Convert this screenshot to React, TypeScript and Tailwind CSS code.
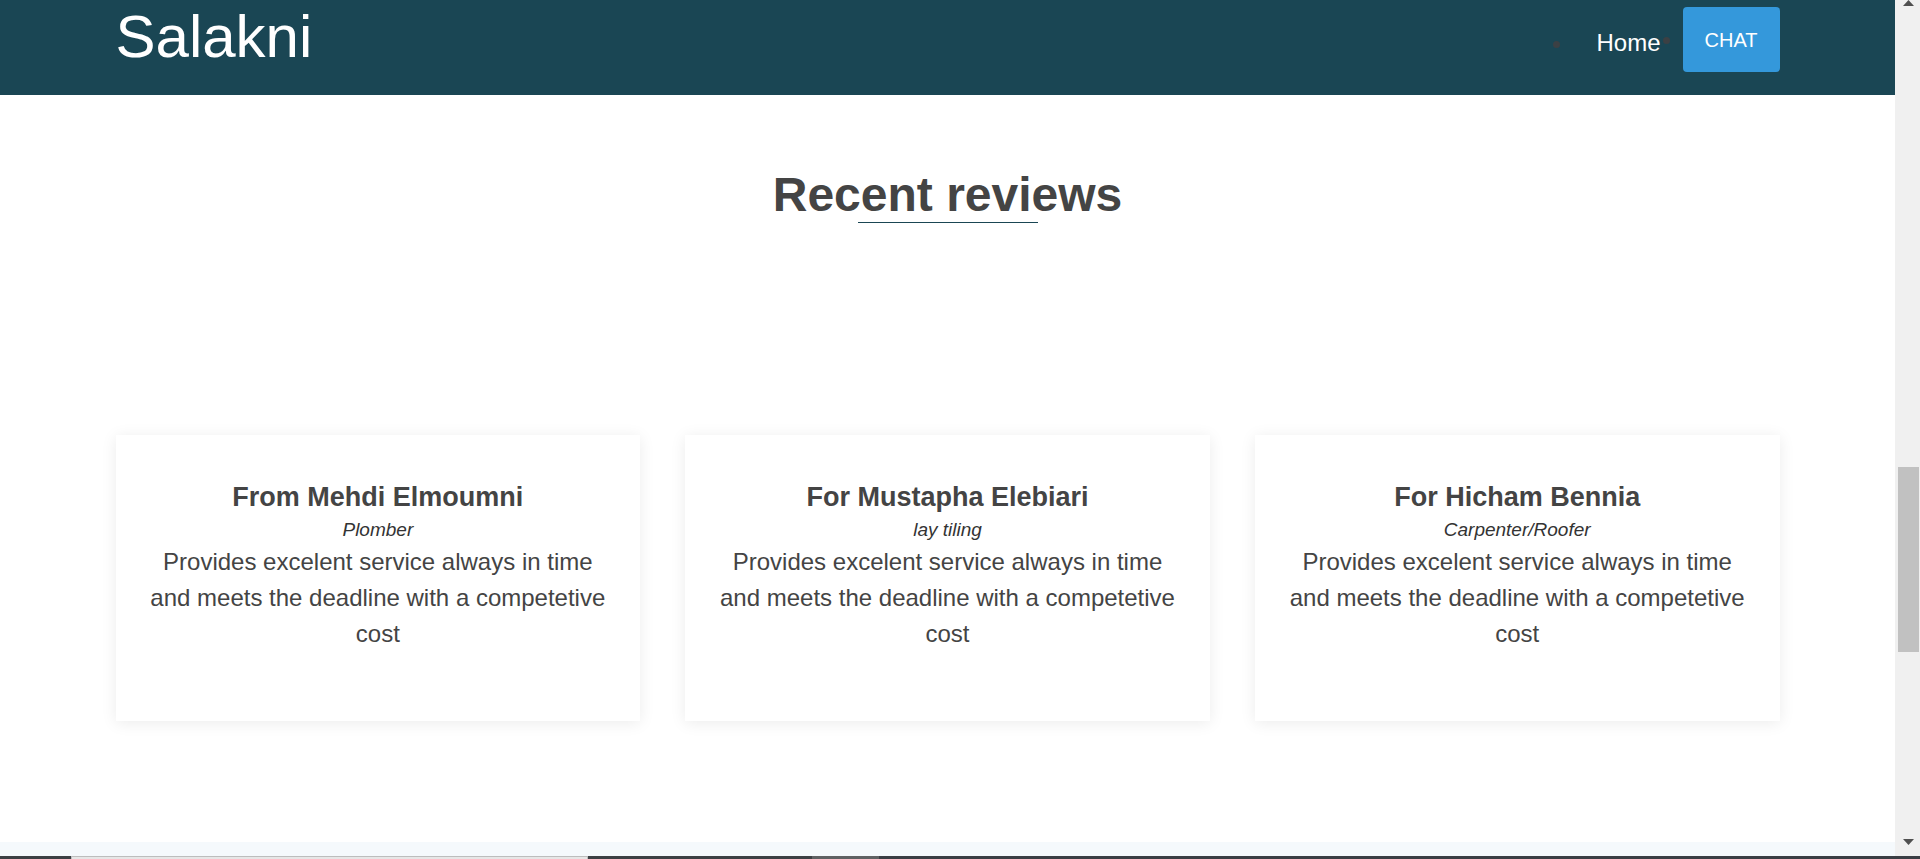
import React from "react";

const reviews = [
  { name: "From Mehdi Elmoumni", job: "Plomber" },
  { name: "For Mustapha Elebiari", job: "lay tiling" },
  { name: "For Hicham Bennia", job: "Carpenter/Roofer" },
];

const text =
  "Provides excelent service always in time and meets the deadline with a competetive cost";

const App = () => {
  return (
    <div className="h-[859px] w-[1920px] flex flex-col overflow-hidden bg-white font-['Liberation_Sans',Arial,sans-serif] text-[#444]">
      <div className="flex h-[856px]">
        {/* Page */}
        <div className="w-[1895px] flex flex-col">
          {/* Header */}
          <header className="h-[95px] bg-[#1a4654] shrink-0">
            <div className="w-[1664px] mx-auto flex items-start justify-between">
              <h1 className="text-[60px] leading-[67px] pt-[3px] text-white">Salakni</h1>
              <nav className="flex items-start">
                <span className="mt-[41px] w-[7px] h-[7px] rounded-full bg-[#3b4044]" />
                <a href="#" className="ml-[36px] mt-[29px] text-[24px] leading-[28px] text-white">
                  Home
                </a>
                <span className="ml-[2px] mt-[37px] w-[7px] h-[7px] rounded-full bg-[#3b4044]" />
                <button className="ml-[13px] mt-[7px] w-[97px] h-[65px] rounded-[4px] bg-[#3498db] text-white text-[20px] leading-[22px] flex items-center justify-center">
                  CHAT
                </button>
              </nav>
            </div>
          </header>

          {/* Recent reviews */}
          <section className="pt-[73px]">
            <h2 className="text-center text-[48px] leading-[54px] font-bold text-[#444]">Recent reviews</h2>
            <div className="mx-auto w-[180px] h-px bg-[#1a4654]" />

            <div className="w-[1664px] mx-auto mt-[212px] grid grid-cols-3 gap-[45px]">
              {reviews.map((r) => (
                <div
                  key={r.name}
                  className="bg-white shadow-[0_2px_15px_rgba(0,0,0,0.08)] px-[30px] pt-[46px] pb-[69px] text-center"
                >
                  <h3 className="text-[27px] leading-[32px] font-bold text-[#444]">{r.name}</h3>
                  <p className="mt-[3px] text-[19px] leading-[28px] italic text-[#333]">{r.job}</p>
                  <p className="text-[24px] leading-[36px] text-[#444]">{text}</p>
                </div>
              ))}
            </div>
          </section>

          <div className="flex-1" />
          <div className="h-[14px] bg-[#f5f9fc]" />
        </div>

        {/* Scrollbar */}
        <div className="w-[25px] bg-[#f0f0f0] flex flex-col items-center">
          <svg width="11" height="7" viewBox="0 0 11 7" className="mt-[0px] ml-[1px]">
            <polygon points="5.5,0 11,6 0,6" fill="#505050" />
          </svg>
          <div className="mt-[460px] ml-[1px] w-[21px] h-[185px] bg-[#c1c1c1]" />
          <div className="flex-1" />
          <svg width="11" height="7" viewBox="0 0 11 7" className="mb-[10px] ml-[1px]">
            <polygon points="0,0 11,0 5.5,6" fill="#505050" />
          </svg>
        </div>
      </div>

      {/* Taskbar strip */}
      <div className="h-[3px] flex">
        <div className="w-[71px] bg-[#3c4043]" />
        <div className="w-[517px] bg-[#bdbdbd] pt-px px-px">
          <div className="h-full bg-[#e6e6e6]" />
        </div>
        <div className="w-[224px] bg-[#3c4043]" />
        <div className="w-[67px] bg-[#5f6163]" />
        <div className="flex-1 bg-[#3a3e44]" />
      </div>
    </div>
  );
};

export default App;
